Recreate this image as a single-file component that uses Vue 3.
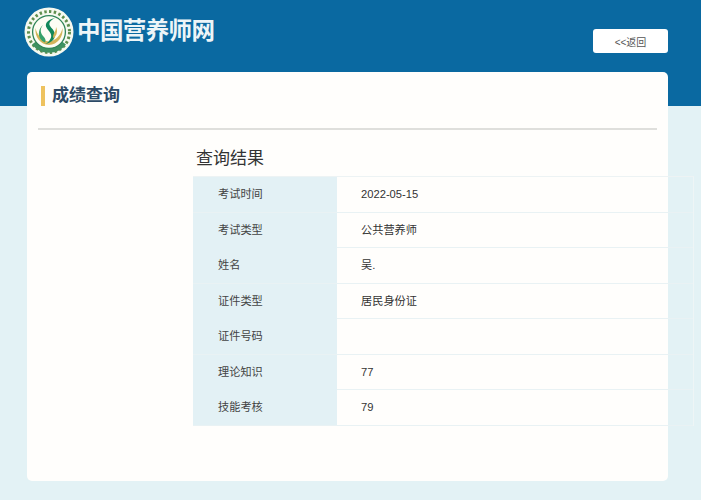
<script setup>
const rows = [
  { label: '考试时间', value: '2022-05-15' },
  { label: '考试类型', value: '公共营养师' },
  { label: '姓名', value: '吴.' },
  { label: '证件类型', value: '居民身份证' },
  { label: '证件号码', value: '' },
  { label: '理论知识', value: '77' },
  { label: '技能考核', value: '79' },
]
</script>

<template>
  <div class="page">
    <header class="top">
      <div class="brand">
        <svg class="logo" width="50" height="50" viewBox="0 0 50 50">
          <circle cx="25" cy="25" r="24.5" fill="#f6f9f0" />
          <circle cx="25" cy="25" r="20.5" fill="none" stroke="#5f8f4e" stroke-width="3" stroke-dasharray="2.4 2.4" />
          <path d="M10 36a19 19 0 0 0 30 0" fill="none" stroke="#3f9160" stroke-width="5" />
          <circle cx="25" cy="25" r="16.4" fill="#fdfdf4" stroke="#2f8458" stroke-width="1.3" />
          <path d="M11.5 21c-1 9 5 16.500 13.500 17 8.500-.5 14.500-8 13.500-17-1.500 7-6.500 12.500-13.500 13.500-7-1-12-6.500-13.500-13.500z" fill="#d3b55a" />
          <path d="M31 11c-8 2-11 6-8 10.500 3 4 6 6.500 3 11-1 2-3 3.500-5 4.500 7-1 11.500-6 9.500-11.500-1.500-4.500-6-6-5-9.500 .7-2 3-4 5.500-5z" fill="#12875a" />
          <path d="M19 18c-3.500 4-2.500 8.500 .5 11.500 2 2 2.500 4 1.500 6-4-1.500-6.800-5.500-6-10.500 .5-3 2-5.500 4-7z" fill="#35a169" />
          <path d="M32 20c2 4 1 8-2.500 11.500-1-2.500 .2-4.500 1.200-6.500 1-2 1.300-3 1.300-5z" fill="#d3b55a" />
        </svg>
        <span class="site">中国营养师网</span>
      </div>
      <button class="back">&lt;&lt;返回</button>
    </header>

    <main class="card">
      <h2 class="card-title">成绩查询</h2>
      <div class="divider"></div>

      <section class="result">
        <h3>查询结果</h3>
        <div class="table">
          <div v-for="r in rows" :key="r.label" class="row">
            <div class="label">{{ r.label }}</div>
            <div class="value">{{ r.value }}</div>
          </div>
        </div>
      </section>
    </main>
  </div>
</template>

<style scoped>
.page {
  width: 701px;
  height: 500px;
  overflow: hidden;
  box-sizing: border-box;
  padding: 0 33px 19px 27px;
  display: flex;
  flex-direction: column;
  background: linear-gradient(#0a69a1 0, #0a69a1 106px, #e3f2f5 106px);
  font-family: "Liberation Sans", "Noto Sans CJK SC", sans-serif;
}

/* Top bar */
.top {
  height: 72px;
  flex: none;
  display: flex;
  justify-content: space-between;
  align-items: flex-start;
}
.brand {
  display: flex;
  align-items: center;
  gap: 3px;
  margin: 7px 0 0 -3px;
}
.logo { display: block; }
.site {
  color: #edf5f8;
  font-size: 23.5px;
  font-weight: 700;
  letter-spacing: -0.6px;
  position: relative;
  top: -3px;
}
.back {
  appearance: none;
  border: 0;
  margin-top: 29px;
  width: 75px;
  height: 24px;
  padding: 0;
  border-radius: 3px;
  background: #fff;
  color: #555;
  font: 10px "Liberation Sans", "Noto Sans CJK SC", sans-serif;
}

/* Card */
.card {
  flex: 1;
  background: #fffefc;
  border-radius: 5px;
  padding: 14px 11px 0;
  display: flex;
  flex-direction: column;
  min-height: 0;
}
.card-title {
  margin: 0 0 0 3px;
  height: 20px;
  padding-left: 7px;
  border-left: 4px solid #eec25e;
  color: #2c4a66;
  font-size: 17px;
  line-height: 20px;
  font-weight: 700;
}
.divider {
  height: 2px;
  margin-top: 22px;
  background: #dfdfdc;
}

/* Result table */
.result { margin: 18px 0 0 155px; }
.result h3 {
  margin: 0 0 6px 3px;
  color: #333;
  font-size: 17px;
  line-height: 22px;
  font-weight: 400;
}
.table {
  width: 501px;
  border-top: 1px solid #edf3f4;
  border-right: 1px solid #eef5f6;
  box-sizing: border-box;
}
.row {
  display: grid;
  grid-template-columns: 144px 1fr;
  height: 35.5px;
  box-sizing: border-box;
  border-bottom: 1px solid #e9f2f4;
  font-size: 11.2px;
  line-height: 35px;
}
.label {
  background: #e3f1f5;
  padding-left: 25px;
  color: #444;
}
.value {
  padding-left: 24px;
  color: #333;
}
</style>
